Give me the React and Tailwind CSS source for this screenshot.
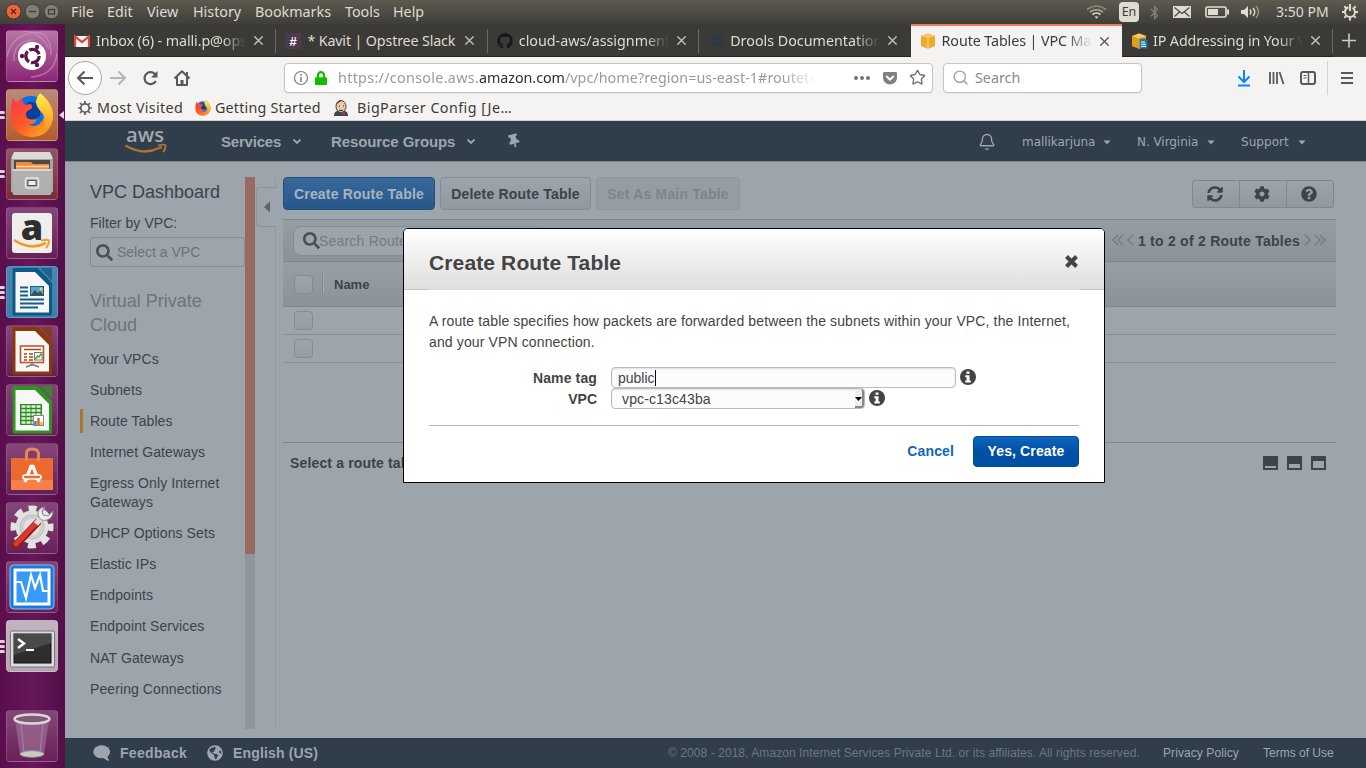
import React from "react";
import {
  FaSearch, FaSyncAlt, FaCog, FaQuestionCircle, FaGithub,
  FaThumbtack, FaGlobeAmericas, FaLock, FaGetPocket, FaBluetoothB,
} from "react-icons/fa";
import { X, Star, Search, Bell } from "lucide-react";

const UI = "font-['Noto_Sans',sans-serif]";

/* ---------- top panel ---------- */
const MENUS = [
  ["File", "w-[36px]"],
  ["Edit", "w-[40px]"],
  ["View", "w-[46px]"],
  ["History", "w-[62px]"],
  ["Bookmarks", "w-[90px]"],
  ["Tools", "w-[48px]"],
  ["Help", "w-[40px]"],
];

function TopPanel() {
  return (
    <div className={`flex h-6 w-full shrink-0 items-center bg-linear-to-b from-[#5d5a4e] to-[#3f3e39] text-[14.3px] text-[#dfdbd2] ${UI}`}>
      <svg width="71" height="24" viewBox="0 0 71 24" className="shrink-0">
        <circle cx="13.5" cy="11.5" r="7.5" fill="#ee6438" stroke="#40352d" />
        <path d="M11 9l5 5M16 9l-5 5" stroke="#4a2a1e" strokeWidth="1.3" />
        <circle cx="32.5" cy="11.5" r="7.3" fill="#807e75" stroke="#403f3a" />
        <path d="M29 11.5h7" stroke="#3c3b37" strokeWidth="1.2" />
        <circle cx="51.5" cy="11.5" r="7.3" fill="#807e75" stroke="#403f3a" />
        <rect x="48.5" y="9.5" width="6" height="4.5" fill="none" stroke="#3c3b37" strokeWidth="1.2" />
      </svg>
      {MENUS.map(([t, w]) => (
        <span key={t} className={`${w} shrink-0 leading-6 whitespace-nowrap`}>{t}</span>
      ))}
      <div className="flex-1" />
      <svg width="32" height="24" viewBox="0 0 32 24" fill="none" className="shrink-0" strokeWidth="1.6">
        <path d="M1 9.5q9.500-7 19 0" stroke="#8f8c82" />
        <path d="M4 12q6.500-4.500 13 0" stroke="#aaa79d" />
        <path d="M6.500 14.500q4-3 8 0" stroke="#dfdbd2" />
        <path d="M8.500 16.500h4l-2 2.300z" fill="#dfdbd2" />
      </svg>
      <span className="ml-px flex h-5 w-5 shrink-0 items-center justify-center rounded-sm bg-[#dfdbd2] text-[12.500px] text-[#3c3b37]">En</span>
      <FaBluetoothB className="ml-[8px] shrink-0 text-[#85827a]" size={15} />
      <svg width="112" height="24" viewBox="0 0 112 24" className="ml-[11px] shrink-0" fill="none">
        <rect x="0" y="6" width="18" height="12" fill="#dfdbd2" />
        <path d="M1.500 7.500l7.500 6 7.500-6M1.500 16.500l5.500-5M16.500 16.500l-5.500-5" stroke="#4a4842" strokeWidth="1.200" />
        <rect x="33" y="7" width="20" height="10" rx="1.500" stroke="#dfdbd2" strokeWidth="1.700" />
        <rect x="35" y="9" width="10" height="6" fill="#dfdbd2" />
        <rect x="54" y="9.500" width="2" height="5" fill="#dfdbd2" />
        <path d="M68 10h3l4-4v12l-4-4h-3z" fill="#dfdbd2" />
        <path d="M77 9.500q2 2.500 0 5M80 8q3.500 4 0 8" stroke="#dfdbd2" strokeWidth="1.400" />
        <path d="M83 6q5 6 0 12" stroke="#96938a" strokeWidth="1.400" />
      </svg>
      <span className="-ml-[9px] w-[65px] shrink-0 text-[14px] leading-6 whitespace-nowrap">3:50 PM</span>
      <svg width="25" height="24" viewBox="0 0 25 24" className="shrink-0" fill="none" stroke="#dfdbd2">
        <circle cx="9" cy="12" r="5" strokeWidth="2" strokeDasharray="27 4.400" strokeDashoffset="-25.700" />
        <path d="M9 4v7" strokeWidth="2" />
        <path d="M9 18v2.500M1 12h2.500M14.500 12H17M3.300 6.300l1.800 1.800M14.700 6.300l-1.800 1.800M3.300 17.700l1.800-1.800M14.700 17.700l-1.800-1.800" strokeWidth="2" />
      </svg>
    </div>
  );
}

/* ---------- launcher ---------- */
const sheet = (c, inner) => (
  <svg width="50" height="50" viewBox="0 0 50 50">
    <path d="M7 1H31L45 16V47Q45 48.500 44 48.500H7Q5.500 48.500 5.500 47V3Q5.500 1 7 1Z" fill={c} />
    <path d="M33 1H45V14Z" fill={c} opacity=".75" />
    <path d="M8.500 5H28L42 19V45.500H8.500Z" fill="#f7f7f7" />
    {inner}
  </svg>
);

const DashIcon = () => (
  <svg width="50" height="50" viewBox="0 0 50 50" fill="none">
    <path d="M0 26Q4 6 24 2T44 24M7 30Q6 10 26 9M50 22Q48 44 24 46M14 0Q34 0 42 18" stroke="#d590c4" strokeWidth="1.500" opacity=".6" />
    <circle cx="25" cy="25" r="14" fill="#fff" />
    <circle cx="25.500" cy="25" r="6.700" stroke="#5e1650" strokeWidth="3.300" strokeDasharray="12 2" />
    <circle cx="15" cy="25" r="2.200" fill="#5e1650" />
    <circle cx="30" cy="16" r="2.200" fill="#5e1650" />
    <circle cx="30" cy="34" r="2.200" fill="#5e1650" />
  </svg>
);

const FirefoxIcon = ({ size = 50 }) => (
  <svg width={size} height={size} viewBox="0 0 50 50" className="shrink-0">
    <defs>
      <linearGradient id="ffa" x1="0" y1="0" x2="1" y2="1">
        <stop offset="0" stopColor="#ff2f52" /><stop offset=".5" stopColor="#ff5a26" /><stop offset="1" stopColor="#ffbf1f" />
      </linearGradient>
      <linearGradient id="ffb" x1="0" y1="0" x2="0" y2="1">
        <stop offset="0" stopColor="#fff04a" /><stop offset="1" stopColor="#ff8a1c" />
      </linearGradient>
    </defs>
    <circle cx="24" cy="23" r="17" fill="#0a6fe0" />
    <path d="M21 12Q34 10 33 26L24 32L14 26Z" fill="#0b3f9e" />
    <path d="M6 8Q8 12 10 12L15 8Q15 12 18 15L24 14Q27 18 22 20Q18 22 19 26Q21 31 30 29Q28 35 21 34Q32 40 37 27Q36 18 30 14Q30 7 33 3Q47 15 46 28Q43 46 25 47Q7 46 4 30Q3 18 6 8Z" fill="url(#ffa)" />
    <path d="M33 3Q47 14 46 28Q44 40 34 44Q40 31 36 24Q30 18 29 13Q29 8 33 3Z" fill="url(#ffb)" />
  </svg>
);

const FilesIcon = () => (
  <svg width="50" height="50" viewBox="0 0 50 50">
    <path d="M6 5H44L46 12V43H4V12Z" fill="#a9a7a4" />
    <path d="M7 3H43L46 10H4Z" fill="#dcdbd8" />
    <rect x="7" y="11" width="36" height="10" fill="#4c4845" />
    <path d="M9 13H24L26 15H42V21H9Z" fill="#f08b42" />
    <path d="M9 17.500H42" stroke="#ffd9a9" strokeWidth="1.500" />
    <path d="M5.500 20H44.500V44Q44.500 46 42.500 46H7.500Q5.500 46 5.500 44Z" fill="#b0b0b0" />
    <path d="M5.500 20H44.500V22H5.500Z" fill="#d6d6d6" />
    <rect x="18.500" y="29" width="13" height="10" rx="2" fill="#a8a8a8" stroke="#e9e9e9" strokeWidth="1.500" />
    <rect x="21" y="31.500" width="8" height="5" fill="#eee" stroke="#555" />
  </svg>
);

const AmazonIcon = () => (
  <svg width="50" height="50" viewBox="0 0 50 50">
    <rect x="5" y="5" width="40" height="40" rx="3" fill="#eeeeec" />
    <text x="25" y="32" textAnchor="middle" fontFamily="Open Sans, sans-serif" fontWeight="800" fontSize="36" fill="#2d2d2d">a</text>
    <path d="M7 32Q24 43 39 35" fill="none" stroke="#f79b1e" strokeWidth="2.600" />
    <path d="M34 32.500Q40 31 42 32.500Q42 37 39 40" fill="none" stroke="#f79b1e" strokeWidth="1.800" />
  </svg>
);

const WriterIcon = () => sheet("#0e5a85", (
  <g>
    <path d="M13 20.500h8M13 24.500h8M13 28.500h8M13 32.500h24M13 36.500h24M13 40.500h18" stroke="#155f8a" strokeWidth="2" />
    <rect x="23.500" y="19.500" width="13" height="9" fill="#58a6d4" stroke="#155f8a" />
    <path d="M24 28l4-5 3 3 2-2 3.500 4z" fill="#4b4b4b" />
    <circle cx="34" cy="22" r="1.500" fill="#ffd04d" />
  </g>
));

const ImpressIcon = () => sheet("#8a3a0a", (
  <g>
    <rect x="13.500" y="20" width="23" height="16.500" fill="#fff" stroke="#c2551f" strokeWidth="1.600" />
    <path d="M17 23.500h17M17 28h3M22 28h4M17 31h3M22 31h4M17 34h3M22 34h4" stroke="#a8440f" strokeWidth="1.600" />
    <rect x="27.500" y="26.500" width="7.500" height="7.500" fill="#fff" stroke="#777" />
    <path d="M28.500 33l2-3 1.500 1 2.500-3.500" stroke="#3fa52b" fill="none" strokeWidth="1.500" />
    <path d="M25 37v3M19 41l5-2h3l5 2" stroke="#777" strokeWidth="1.500" fill="none" />
  </g>
));

const CalcIcon = () => sheet("#2f9420", (
  <g>
    <rect x="13" y="19" width="22" height="21" fill="#2a8a1d" />
    <path d="M14.500 21.500h19M14.500 25.500h19M14.500 29.500h19M14.500 33.500h19M14.500 37.500h19" stroke="#dff3db" strokeWidth="2.400" strokeDasharray="4 1" />
    <rect x="26.500" y="30.500" width="10" height="10" fill="#fff" stroke="#888" />
    <path d="M28.500 36v4" stroke="#2b80d0" strokeWidth="2.400" /><path d="M31.500 33v7" stroke="#e25b1c" strokeWidth="2.400" /><path d="M34.500 37v3" stroke="#f5b819" strokeWidth="2.400" />
  </g>
));

const SoftwareIcon = () => (
  <svg width="50" height="50" viewBox="0 0 50 50" fill="none">
    <path d="M4 14H46V46H4Z" fill="#ec6a30" />
    <path d="M4 36H46V46H4Z" fill="#f58148" />
    <path d="M19.500 17V9Q19.500 5 25 5T31.500 9V17" stroke="#e98557" strokeWidth="3" />
    <path d="M18 38L24 22.500H26L32 38" stroke="#fff" strokeWidth="3.400" />
    <rect x="16" y="31" width="18" height="4" rx="2" fill="#ec6a30" stroke="#fff" strokeWidth="1.700" />
  </svg>
);

const SettingsIcon = () => (
  <svg width="50" height="50" viewBox="0 0 50 50" fill="none">
    <circle cx="25" cy="24" r="18.500" stroke="#e3e3e3" strokeWidth="6" strokeDasharray="8 6.530" strokeDashoffset="4" />
    <circle cx="25" cy="24" r="16.500" fill="#e0e0de" />
    <circle cx="25" cy="24" r="12" fill="#cfcfcd" stroke="#bdbdbd" />
    <circle cx="25" cy="24" r="8" fill="#e6e2e5" />
    <path d="M9 42L30 20" stroke="#a01414" strokeWidth="7.500" strokeLinecap="round" />
    <path d="M9 41L29 20" stroke="#d63a33" strokeWidth="5" strokeLinecap="round" />
    <path d="M29 21L35 14" stroke="#dcdcdc" strokeWidth="5.500" />
    <path d="M38 4Q30 5 31 12Q33 19 40 17Q46 15 46 8L41 13L36 12L35 8Z" fill="#ececec" stroke="#8c8c8c" />
  </svg>
);

const MonitorIcon = () => (
  <svg width="50" height="50" viewBox="0 0 50 50" fill="none">
    <rect x="3" y="3" width="44" height="44" rx="4" fill="#1c79db" stroke="#7cc6ff" />
    <rect x="8" y="8" width="34" height="34" fill="#369bf8" stroke="#fff" strokeWidth="3" />
    <path d="M9 20h5l5 16 5-23 4 13 5-13 3 16h6" stroke="#fff" strokeWidth="2.200" />
  </svg>
);

const TerminalIcon = () => (
  <svg width="50" height="50" viewBox="0 0 50 50" fill="none">
    <rect x="3.500" y="10" width="44" height="36" rx="1.500" fill="#deddda" stroke="#777" />
    <rect x="7" y="13" width="37" height="29" fill="#2c2f2d" stroke="#111" />
    <path d="M7 13H44V22L7 34Z" fill="#474a48" />
    <path d="M11 18l6 4.500-6 4.500" stroke="#fff" strokeWidth="2.400" />
    <path d="M19 29h8" stroke="#fff" strokeWidth="2" />
  </svg>
);

const TrashIcon = () => (
  <svg width="50" height="50" viewBox="0 0 50 50" fill="none">
    <path d="M8 9L13 43Q25 49 37 43L42 9Z" fill="#9a6a92" opacity=".75" />
    <path d="M14 12L17 42M36 12L33 42" stroke="#c7a9c3" opacity=".5" />
    <ellipse cx="25" cy="8" rx="17.500" ry="4.500" fill="#7e5c78" stroke="#d9d9d9" strokeWidth="2.500" />
    <ellipse cx="25" cy="43" rx="12" ry="3.200" fill="#c9c9c5" stroke="#989898" />
  </svg>
);

const TILES = [
  ["Dash", DashIcon, "from-[#b577a5] to-[#8b2377]", 0],
  ["Firefox", FirefoxIcon, "from-[#b88b79] to-[#b45c26]", 2],
  ["Files", FilesIcon, "from-[#8f5468] to-[#7b2b39]", 2],
  ["Amazon", AmazonIcon, "from-[#86467a] to-[#682057]", 0],
  ["Writer", WriterIcon, "from-[#4a86b2] to-[#3d80ac]", 3],
  ["Impress", ImpressIcon, "from-[#86467a] to-[#64204f]", 0],
  ["Calc", CalcIcon, "from-[#7d4874] to-[#65215a]", 0],
  ["Software", SoftwareIcon, "from-[#86467a] to-[#642056]", 0],
  ["Settings", SettingsIcon, "from-[#86467a] to-[#682057]", 0],
  ["Monitor", MonitorIcon, "from-[#86467a] to-[#682057]", 0],
  ["Terminal", TerminalIcon, "from-[#c3b3c1] to-[#b5a5b3]", 3],
];

function Tile({ Icon, bg, marks, active }) {
  return (
    <div className="flex h-[52px] w-[65px] items-center">
      <div className="flex w-[6px] shrink-0 flex-col gap-[2px]">
        {Array.from({ length: marks }).map((_, i) => (
          <div key={i} className="h-[3px] w-[5px] rounded-r-sm bg-[#dcd0da]" />
        ))}
      </div>
      <div className={`flex h-[52px] w-[52px] shrink-0 items-center justify-center rounded-[4px] border border-[#ffffff26] bg-linear-to-b ${bg}`}>
        <Icon />
      </div>
      <svg width="7" height="10" viewBox="0 0 7 10" className="shrink-0">
        {active && <path d="M1 5L6 1V9Z" fill="#e5dbe3" />}
      </svg>
    </div>
  );
}

function Launcher() {
  return (
    <div className="flex w-[65px] shrink-0 flex-col bg-linear-to-r from-[#5a0e4c] via-[#65175a] to-[#530e47] pt-[6px]">
      <div className="flex flex-col gap-[7px]">
        {TILES.map(([n, I, bg, m]) => (
          <Tile key={n} Icon={I} bg={bg} marks={m} active={n === "Firefox"} />
        ))}
      </div>
      <div className="mt-[38px]"><Tile Icon={TrashIcon} bg="from-[#86467a] to-[#682057]" marks={0} /></div>
    </div>
  );
}

/* ---------- browser chrome ---------- */
const Gmail = () => (
  <svg width="16" height="16" viewBox="0 0 16 16"><rect x="1" y="3" width="14" height="11" fill="#f3f3f3" /><path d="M1 14V3.500l7 5.500 7-5.500V14" fill="none" stroke="#db4437" strokeWidth="2.200" /></svg>
);
const Slack = () => (
  <svg width="16" height="16" viewBox="0 0 16 16"><rect width="16" height="16" rx="1" fill="#4d3a4f" /><text x="8" y="12.500" textAnchor="middle" fontSize="13" fontWeight="bold" fontFamily="Liberation Sans, sans-serif" fill="#fff">#</text></svg>
);
const JBoss = () => (
  <svg width="16" height="16" viewBox="0 0 16 16" fill="#26384f" fontFamily="Liberation Sans, sans-serif" fontWeight="bold"><text x="0" y="7" fontSize="7" textLength="15">jboss</text><text x="0" y="14" fontSize="9" textLength="16">.org</text></svg>
);
const Cube = ({ doc }) => (
  <svg width="17" height="16" viewBox="0 0 17 16">
    <path d="M1 3l7-2.500L15 3v10l-7 2.700L1 13z" fill="#f0a92a" />
    <path d="M1 3l7-2.500L15 3 8 5.500z" fill="#f9c95c" />
    <path d="M8 5.500V15.500" stroke="#fbe0a2" strokeWidth="1" />
    {doc && <g><path d="M1 3l7 2.500v10L1 13z" fill="#e89a1c" /><path d="M8.500 5.500H14l2.500 2.500V15.500H8.500z" fill="#1f77a8" /><path d="M10 9h4M10 11.200h5M10 13.400h5" stroke="#fff" /></g>}
  </svg>
);
const TABS = [
  ["Inbox (6) - malli.p@ops", Gmail, "tracking-[-0.1px]"],
  ["* Kavit | Opstree Slack", Slack, "tracking-[-0.15px]"],
  ["cloud-aws/assignment", () => <FaGithub size={16} color="#15171a" />, "tracking-[0px]"],
  ["Drools Documentation", JBoss, "tracking-[0px]"],
  ["Route Tables | VPC Man", Cube, "tracking-[-0.1px]"],
  ["IP Addressing in Your V", () => <Cube doc />, "tracking-[-0.1px]"],
];

function Tabs() {
  return (
    <div className={`flex h-[33px] shrink-0 bg-[#3c3a36] text-[14.300px] text-[#dfdbd2] ${UI}`}>
      {TABS.map(([t, I, tr], i) => (
        <div
          key={t}
          className={`flex w-[211.400px] shrink-0 items-center pl-[9px] ${i === 4 ? "border-t-2 border-[#ef7d53] bg-[#f4f3f2] pb-px text-[#3c3b37]" : "border-b border-[#262522] pt-px"}`}
        >
          <span className="w-[22px] shrink-0"><I /></span>
          <span className={`w-[153px] shrink-0 overflow-hidden leading-5 whitespace-nowrap ${tr} ${i === 1 ? "" : "mask-[linear-gradient(to_right,#000_82%,transparent_98%)]"}`}>{t}</span>
          <X size={15} strokeWidth={2.200} className={`ml-[2px] shrink-0 ${i === 4 ? "text-[#5b5a57]" : "text-[#c5c1b9]"}`} />
          {(i < 3 || i === 5) && <span className="ml-auto h-6 w-px bg-[#6c6a65]" />}
        </div>
      ))}
      <svg width="32" height="33" viewBox="0 0 32 33" className="shrink-0"><path d="M9 16.500h14M16 9.500v14" stroke="#cfcbc3" strokeWidth="1.600" /></svg>
    </div>
  );
}

function Toolbar() {
  return (
    <div className={`flex h-[38px] shrink-0 items-center bg-[#f4f3f2] pt-[3px] text-[14.300px] ${UI}`}>
      <svg width="219" height="36" viewBox="65 59 219 36" fill="none" className="shrink-0" stroke="#5a5855">
        <circle cx="85" cy="77" r="16.500" fill="#fdfdfd" stroke="#a9a6a2" />
        <path d="M93 77H78M84.500 70.500L78 77l6.500 6.500" strokeWidth="2" />
        <path d="M110 77h15M118.500 70.500L125 77l-6.500 6.500" stroke="#b8b6b3" strokeWidth="2" />
        <path d="M155.800 80a6 6 0 1 1-.5-6.500" strokeWidth="2.200" />
        <path d="M157.500 70v6.500h-6.500z" fill="#5a5855" stroke="none" />
        <path d="M174.500 77.500L182 70.200l7.500 7.300M177 76v8h10v-8" strokeWidth="2" strokeLinejoin="round" />
        <path d="M182 84v-5" strokeWidth="3" /><path d="M187 71v3" strokeWidth="2" />
      </svg>
      <div className="flex h-[30px] w-[649px] shrink-0 items-center rounded-[4px] border border-[#c6c4c1] bg-white pl-[8px] shadow-xs">
        <svg width="16" height="16" viewBox="0 0 16 16" fill="none" stroke="#7d7d7d"><circle cx="8" cy="8" r="6.500" strokeWidth="1.200" /><path d="M8 7v5M8 4v1.700" strokeWidth="1.500" /></svg>
        <FaLock size={14} className="ml-[5px] shrink-0 text-[#12bc00]" />
        <span className="ml-[10px] w-[482px] shrink-0 overflow-hidden mask-[linear-gradient(to_right,#000_92%,transparent_99%)] leading-6 tracking-[0.320px] whitespace-nowrap text-[#9a9a9a]">
          https://console.aws.<span className="tracking-[-0.050px] text-[#2e2e2e]">amazon.com</span><span className="tracking-[0.060px]">/vpc/home?region=us-east-1#routeta</span>
        </span>
        <svg width="18" height="6" viewBox="0 0 18 6" fill="#737373" className="ml-[33px]"><circle cx="3" cy="3" r="2" /><circle cx="9" cy="3" r="2" /><circle cx="15" cy="3" r="2" /></svg>
        <FaGetPocket size={16} className="ml-[11px] text-[#808080]" />
        <Star size={17} strokeWidth={2} className="ml-[11px] text-[#737373]" />
      </div>
      <div className="ml-[10px] flex h-[30px] w-[199px] shrink-0 items-center rounded-[4px] border border-[#c6c4c1] bg-white pl-[8px] text-[#8a8a8a] shadow-xs">
        <Search size={17} strokeWidth={2.100} className="text-[#a3a3a3]" />
        <span className="ml-[6px] text-[14.300px] leading-6">Search</span>
      </div>
      <svg width="224" height="36" viewBox="1142 59 224 36" fill="none" className="shrink-0" stroke="#5a5855" strokeWidth="2">
        <path d="M1244 69v11M1238.500 75.500l5.500 5.500 5.500-5.500M1238 84.500h12" stroke="#0a84ff" />
        <path d="M1270 71v12M1273.500 71v12M1277 71v12M1279.500 71l4 12" strokeWidth="1.800" />
        <rect x="1301" y="71" width="14" height="12" rx="2" />
        <path d="M1308.500 71v12" strokeWidth="1.500" /><path d="M1303.500 74.500h3M1303.500 77h3" strokeWidth="1" />
        <path d="M1327.500 60v34" stroke="#d5d3d0" strokeWidth="1" />
        <path d="M1341 72h12M1341 77h12M1341 82h12" />
      </svg>
    </div>
  );
}

function Bookmarks() {
  return (
    <div className={`flex h-[26px] shrink-0 items-center border-b border-[#d3d0cb] bg-[#f4f3f2] pl-[12px] text-[14.300px] text-[#3c3b37] ${UI}`}>
      <svg width="16" height="16" viewBox="0 0 16 16" fill="none" stroke="#5f5d5a"><circle cx="8" cy="8" r="4.200" strokeWidth="1.700" /><path d="M8 1v3M8 12v3M1 8h3M12 8h3M3 3l2 2M11 11l2 2M3 13l2-2M11 5l2-2" strokeWidth="1.700" /></svg>
      <span className="ml-[4px] w-[97px] shrink-0 leading-5 tracking-[0.320px] whitespace-nowrap">Most Visited</span>
      <FirefoxIcon size={18} />
      <span className="ml-[3px] w-[118px] shrink-0 leading-5 tracking-[0.200px] whitespace-nowrap">Getting Started</span>
      <svg width="16" height="16" viewBox="0 0 16 16" className="shrink-0"><path d="M1 16q0-5 4-5h6q4 0 4 5z" fill="#33475a" /><ellipse cx="8" cy="6.500" rx="5" ry="6" fill="#edcbae" stroke="#4d3d33" /><path d="M3 5Q4 0 9 .5L5 3z" fill="#4d3d33" /><path d="M6 6h1M10 6h1M6 10q2 1 4 0" stroke="#333" /><path d="M7 13l5-1v3z" fill="#d33" /></svg>
      <span className="ml-[8px] leading-5 tracking-[0.450px] whitespace-nowrap">BigParser Config [Je…</span>
    </div>
  );
}

/* ---------- console ---------- */
const Chevron = () => (
  <svg width="10" height="8" viewBox="0 0 10 8" className="shrink-0"><path d="M1.500 1.500L5 5l3.500-3.500" fill="none" stroke="#9da5ac" strokeWidth="1.800" /></svg>
);
const Caret = () => (
  <svg width="8" height="5" viewBox="0 0 8 5" className="shrink-0"><path d="M.5 .5h7L4 4.500z" fill="#9da5ac" /></svg>
);

function AwsNav() {
  return (
    <div className="flex h-10 shrink-0 items-center bg-[#303d4b] pt-[2px] text-[#9ea6ad]">
      <svg width="44" height="30" viewBox="0 0 44 30" className="-mt-[2px] ml-[60px] shrink-0">
        <text x="1" y="15.500" fontFamily="Open Sans, sans-serif" fontWeight="600" fontSize="20" textLength="38" lengthAdjust="spacingAndGlyphs" fill="#a3a9ae">aws</text>
        <path d="M.5 19.500Q18 30 34 22L37 21" fill="none" stroke="#a8762f" strokeWidth="2.400" />
        <path d="M33 19.500Q38 18 40.500 19Q41 23 38 26" fill="none" stroke="#a8762f" strokeWidth="1.800" />
      </svg>
      <span className="ml-[52px] w-[71px] shrink-0 text-[15px] font-bold tracking-[-0.200px] whitespace-nowrap">Services</span>
      <Chevron />
      <span className="ml-[29px] w-[135px] shrink-0 text-[15px] font-bold tracking-[-0.100px] whitespace-nowrap">Resource Groups</span>
      <Chevron />
      <FaThumbtack size={14} className="-mt-[2px] ml-[31px] shrink-0 rotate-[-15deg]" />
      <div className="ml-[457px] shrink-0"><Bell size={18} strokeWidth={1.800} /></div>
      <div className="flex items-center font-['DejaVu_Sans',sans-serif] text-[12px] whitespace-nowrap">
        <span className="ml-[26px] w-[81px] tracking-[-0.050px]">mallikarjuna</span><Caret />
        <span className="ml-[26px] w-[70px] tracking-[-0.050px]">N. Virginia</span><Caret />
        <span className="ml-[26px] w-[57px] tracking-[0.050px]">Support</span><Caret />
      </div>
    </div>
  );
}

const LINKS = ["Your VPCs", "Subnets", "Route Tables", "Internet Gateways", "Egress Only Internet Gateways", "DHCP Options Sets", "Elastic IPs", "Endpoints", "Endpoint Services", "NAT Gateways", "Peering Connections"];

function SideNav() {
  return (
    <div className="flex w-[211px] shrink-0 pt-[15px]">
      <div className="flex w-[180px] shrink-0 flex-col pl-[15px] text-[14px] text-[#3c434a]">
        <div className="pl-[10px] text-[18px] leading-[30px]">VPC Dashboard</div>
        <div className="mt-[6px] pl-[10px] leading-5 tracking-[0.070px]">Filter by VPC:</div>
        <div className="mt-[4px] ml-[10px] flex h-[30px] items-center rounded-[3px] border border-[#858d94] pl-[5px] text-[#6b7279]">
          <FaSearch size={17} className="text-[#4a5158]" /><span className="ml-[4px]">Select a VPC</span>
        </div>
        <div className="mt-[22px] pl-[10px] text-[18px] leading-6 text-[#6d747b]">Virtual Private<br />Cloud</div>
        <div className="mt-[10px] flex flex-col gap-[7px] tracking-[0.090px]">
          {LINKS.map((l) => (
            <div key={l} className={`flex min-h-[24px] items-center border-l-[3px] pl-[7px] leading-[19px] ${l === "Route Tables" ? "border-[#a8762f]" : "border-transparent"} ${l.startsWith("Egress") ? "h-[43px] pr-[20px]" : ""} ${l.startsWith("NAT") ? "mt-px" : ""}`}>{l}</div>
          ))}
        </div>
      </div>
      <div className="h-[552px] w-[10px] shrink-0 bg-[#8f979d]"><div className="h-[377px] bg-[#996b60]" /></div>
      <div className="flex h-[552px] w-[21px] shrink-0 flex-col">
        <div className="h-[10px] border-r border-[#9299a0]" />
        <div className="ml-px flex h-10 items-center rounded-l-[4px] border border-r-0 border-[#8b9299] pl-[7px]">
          <svg width="7" height="12" viewBox="0 0 7 12"><path d="M0 6L6 .5V11.500z" fill="#5c636a" /></svg>
        </div>
        <div className="flex-1 border-r border-[#9299a0]" />
      </div>
    </div>
  );
}

const Check = ({ className }) => <span className={`h-[19px] w-[19px] shrink-0 rounded-[4px] border-[1.500px] border-[#848c93] bg-linear-to-b from-[#9da5ac] to-[#959da4] ${className}`} />;

const Pager = ({ flip, className }) => (
  <svg width="24" height="12" viewBox="0 0 24 12" fill="none" stroke="#757d84" strokeWidth="1.500" className={`-mt-[2px] shrink-0 ${flip ? "-scale-x-100" : ""} ${className}`}>
    <path d="M6 1L1 6l5 5M11 1L6 6l5 5M21 1l-5 5 5 5" />
  </svg>
);

const PanelIcon = ({ h }) => (
  <svg width="15" height="14" viewBox="0 0 15 14"><rect width="15" height="14" fill="#3d444b" /><rect x="2" y={12 - h} width="11" height={h} fill="#9da5ac" /></svg>
);

function Content() {
  return (
    <div className="ml-[7px] w-[1053px] pt-[15px] text-[14px] font-bold tracking-[0.200px] text-[#3c434a]">
      <div className="flex h-[33px] items-center">
        <div className="flex h-[33px] w-[152px] items-center justify-center rounded-[4px] border border-[#234f7d] bg-linear-to-b from-[#38699c] to-[#265788] pt-[2px] whitespace-nowrap text-[#a8b4c0]">Create Route Table</div>
        <div className="ml-[5px] flex h-[33px] w-[151px] items-center justify-center rounded-[4px] border border-[#848c93] bg-linear-to-b from-[#9da5ac] to-[#9098a0] pt-[2px] whitespace-nowrap">Delete Route Table</div>
        <div className="ml-[5px] flex h-[33px] w-[144px] items-center justify-center rounded-[4px] border border-[#8f979e] bg-[#959da4] pt-[2px] whitespace-nowrap text-[#7d858c]">Set As Main Table</div>
        <div className="mr-[2px] ml-auto flex h-[28px] w-[142px] items-center rounded-[3px] border border-[#80888f] bg-linear-to-b from-[#9ca4ab] to-[#9098a0]">
          <span className="flex h-full w-[47px] items-center justify-center border-r border-[#80888f] pr-[2px]"><FaSyncAlt size={16} /></span>
          <span className="flex h-full w-[47px] items-center justify-center border-r border-[#80888f] pr-[2px]"><FaCog size={16} /></span>
          <span className="flex h-full flex-1 items-center justify-center pr-[2px]"><FaQuestionCircle size={16} /></span>
        </div>
      </div>
      <div className="mt-[9px] flex h-[43px] items-center border-y border-[#7f878e] bg-linear-to-b from-[#969ea5] to-[#8b9399]">
        <div className="ml-[10px] flex h-[30px] w-[252px] items-center rounded-[8px] border border-[#848c93] bg-[#9da5ac] pl-[9px] font-normal text-[#737b82]">
          <FaSearch size={17} className="text-[#4a5158]" /><span className="-ml-px pt-[2px]">Search Route Tables</span>
        </div>
        <Pager className="mr-[2px] ml-auto" />
        <span className="pt-[2px] tracking-[0.250px] whitespace-nowrap">1 to 2 of 2 Route Tables</span>
        <Pager flip className="mr-[10px] ml-[2px]" />
      </div>
      <div className="flex h-[45px] items-center border-b border-[#7f878e] bg-linear-to-b from-[#979fa6] to-[#8b9399] text-[13px] tracking-[0px]">
        <Check className="ml-[11px]" />
        <span className="ml-[9px] h-5 w-px bg-[#7f878e]" />
        <span className="h-5 w-px bg-[#a5adb3]" />
        <span className="ml-[10px] pt-[2px]">Name</span>
      </div>
      <div className="flex h-[28px] items-center border-b border-[#878f96]"><Check className="ml-[11px]" /></div>
      <div className="flex h-[28px] items-center border-b border-[#878f96]"><Check className="ml-[11px]" /></div>
      <div className="h-[80px] border-b border-[#7f878e]" />
      <div className="flex h-[40px] items-center pr-[10px] pl-[7px]">
        <span className="tracking-[0.150px]">Select a route table above</span>
        <span className="ml-auto flex gap-[9px]"><PanelIcon h={2} /><PanelIcon h={4} /><PanelIcon h={7} /></span>
      </div>
    </div>
  );
}

function Footer() {
  return (
    <div className="flex h-[30px] shrink-0 items-center bg-[#303d4b] text-[12px] whitespace-nowrap text-[#9ea6ad]">
      <svg width="18" height="16" viewBox="0 0 18 16" className="ml-[28px] shrink-0" fill="#9ea6ad"><ellipse cx="8.700" cy="6.800" rx="8.500" ry="6.500" /><path d="M10 12q3 4 6.500 3.700Q14 13 14.500 10z" /></svg>
      <span className="ml-[9px] w-[87px] shrink-0 text-[14px] font-bold tracking-[0.320px]">Feedback</span>
      <FaGlobeAmericas size={16} className="shrink-0" />
      <span className="ml-[10px] w-[435px] shrink-0 text-[14px] font-bold tracking-[0.150px]">English (US)</span>
      <span className="w-[495px] shrink-0 tracking-[0.068px] text-[#6c7782]">© 2008 - 2018, Amazon Internet Services Private Ltd. or its affiliates. All rights reserved.</span>
      <span className="w-[100px] shrink-0 tracking-[0.080px]">Privacy Policy</span>
      <span>Terms of Use</span>
    </div>
  );
}

const Info = () => (
  <svg width="16" height="16" viewBox="0 0 16 16" className="-mt-px ml-[4px] shrink-0">
    <circle cx="8" cy="8" r="8" fill="#444" />
    <path d="M6.500 2.500h3v2.300h-3zM5.300 6.200h4.200v5.300h1.300v2H5.300v-2h1.300V8.200H5.300z" fill="#fff" />
  </svg>
);

function Dialog() {
  return (
    <div className="absolute top-[228px] left-[403px] flex h-[255px] w-[702px] flex-col rounded-t-[5px] border border-black bg-white text-[14px] tracking-[0.130px] text-[#444]">
      <div className="flex h-[60px] shrink-0 items-center rounded-t-[4px] bg-linear-to-b from-white to-[#dedede] px-[25px] pt-[8px]">
        <span className="text-[21px] font-bold whitespace-nowrap">Create Route Table</span>
        <svg width="16" height="16" viewBox="0 0 16 16" className="mt-[-4px] ml-auto"><path d="M3.500 3.500L13.500 13.500M13.500 3.500L3.500 13.500" stroke="#444" strokeWidth="4" /></svg>
      </div>
      <div className="flex h-px shrink-0 justify-between bg-[#dedede]"><span className="h-px w-[25px] bg-[#c4c4c4]" /><span className="h-px w-[25px] bg-[#c4c4c4]" /></div>
      <div className="mt-[21px] px-[25px] leading-[21px] whitespace-nowrap">
        A route table specifies how packets are forwarded between the subnets within your VPC, the Internet,<br />and your VPN connection.
      </div>
      <div className="mt-[14px] flex h-[21px] items-center">
        <span className="w-[193px] shrink-0 pt-[2px] text-right font-bold">Name tag</span>
        <div className="ml-[14px] flex h-[21px] w-[345px] items-center rounded-[4px] border border-[#bbb] bg-[#fcfcfc] pt-px pl-[6px] tracking-[0px] shadow-[inset_0_1px_2px_#ddd]">public<span className="h-4 w-px bg-black" /></div>
        <Info />
      </div>
      <div className="flex h-[21px] items-center">
        <span className="w-[193px] shrink-0 pt-[2px] text-right font-bold tracking-[0px]">VPC</span>
        <div className="ml-[14px] flex h-[21px] w-[254px] items-center rounded-[4px] border border-[#bbb] bg-[#fcfcfc] pl-[10px] shadow-[inset_0_1px_2px_#ddd]">
          <span className="pt-[2px]">vpc-c13c43ba</span>
          <span className="ml-auto flex h-[19px] w-[9px] items-center justify-center rounded-r-[3px] border-r-2 border-b-2 border-[#888] bg-[#eee]">
            <svg width="7" height="4" viewBox="0 0 7 4" className="mt-[2px] shrink-0"><path d="M0 0h7L3.500 4z" fill="#000" /></svg>
          </span>
        </div>
        <Info />
      </div>
      <div className="mx-[25px] mt-[16px] flex h-[44px] items-end justify-end border-t border-[#b5b5b5] pb-[2px] font-bold">
        <span className="mr-[19px] leading-[31px] text-[#1166bb]">Cancel</span>
        <span className="flex h-[31px] w-[106px] items-center justify-center rounded-[4px] border border-[#004a99] bg-linear-to-b from-[#0f66bb] to-[#0050a6] to-50% text-white">Yes, Create</span>
      </div>
    </div>
  );
}

export default function App() {
  return (
    <div className="relative flex h-[768px] w-[1366px] flex-col overflow-hidden font-['Liberation_Sans',Arial,sans-serif]">
      <TopPanel />
      <div className="flex h-[744px]">
        <Launcher />
        <div className="flex w-[1301px] flex-col">
          <Tabs />
          <Toolbar />
          <Bookmarks />
          <AwsNav />
          <div className="flex h-[577px] shrink-0 border-t border-[#80888f] bg-[#9da5ac]">
            <SideNav />
            <Content />
          </div>
          <Footer />
        </div>
      </div>
      <Dialog />
    </div>
  );
}
